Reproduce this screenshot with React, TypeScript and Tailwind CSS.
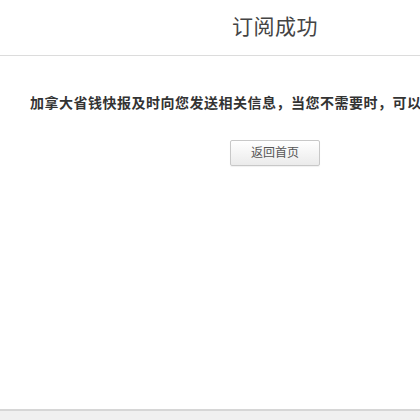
import React from 'react';

const App: React.FC = () => {
  return (
    <div
      className="w-full h-[420px] overflow-hidden bg-white flex flex-col"
      style={{ fontFamily: '"Liberation Sans", "Noto Sans CJK SC", sans-serif' }}
    >
      <div className="w-[550px] flex-1 flex flex-col">
        <header className="h-[56px] shrink-0 flex items-center justify-center border-b border-[#dcdcdc]">
          <h1 className="text-[21px] leading-none text-[#444] tracking-[0.5px] -mt-[2px]">订阅成功</h1>
        </header>

        <main className="flex-1 flex flex-col">
          <p className="mt-[37px] pl-[30px] whitespace-nowrap text-[14px] leading-[20px] font-bold text-[#333] tracking-[0.5px]">
            加拿大省钱快报及时向您发送相关信息，当您不需要时，可以随时取消订阅。
          </p>
          <div className="mt-[27px] flex justify-center">
            <button className="w-[90px] h-[26px] rounded-[2px] border border-[#c8c8c8] bg-gradient-to-b from-white to-[#ebebeb] text-[12px] text-[#555] shadow-[0_1px_1px_rgba(0,0,0,0.06)]">
              返回首页
            </button>
          </div>
        </main>
      </div>

      <footer className="h-[11px] shrink-0 w-full bg-[#f0f0f0] border-t-2 border-[#d6d6d6]" />
    </div>
  );
};

export default App;
